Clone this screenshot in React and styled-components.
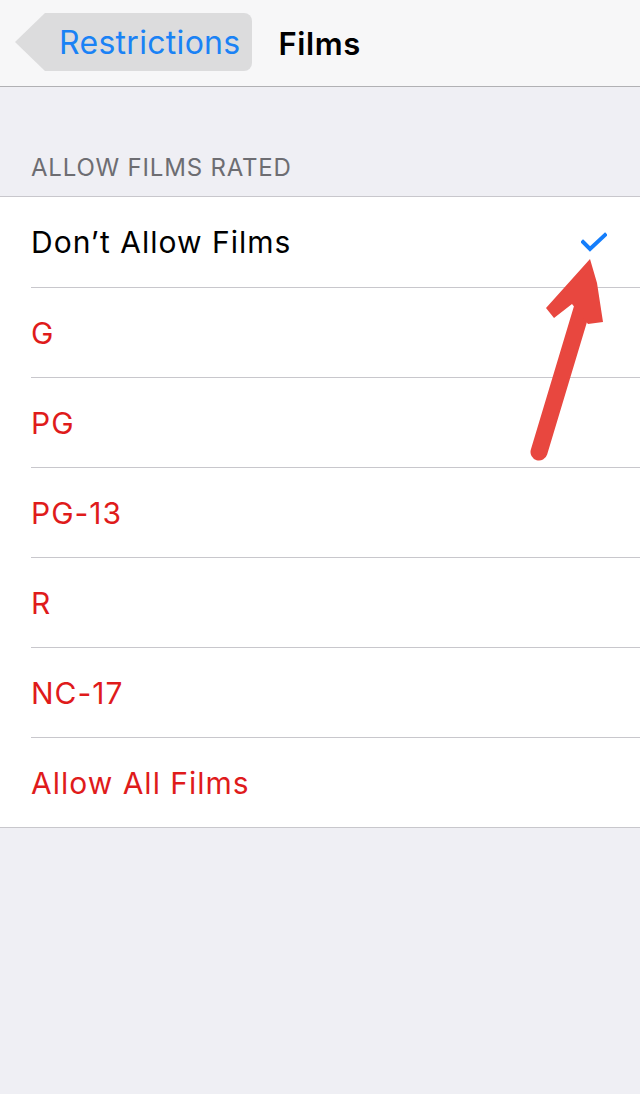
import React from "react";
import styled, { createGlobalStyle } from "styled-components";

const GlobalStyle = createGlobalStyle`
  body {
    margin: 0;
    background: #efeff4;
    font-family: "Inter", "Liberation Sans", sans-serif;
  }
`;

const ratings = ["G", "PG", "PG-13", "R", "NC-17", "Allow All Films"];

const App = () => (
  <Screen>
    <GlobalStyle />
    <NavBar>
      <BackButton>Restrictions</BackButton>
      <Title>Films</Title>
    </NavBar>
    <SectionHeader>ALLOW FILMS RATED</SectionHeader>
    <List>
      <Row>
        <Label>Don’t Allow Films</Label>
        <Check viewBox="0 0 26 20">
          <polyline points="2,10 9,17 24,3" />
        </Check>
      </Row>
      {ratings.map((r) => (
        <Row key={r}>
          <Label $restricted>{r}</Label>
        </Row>
      ))}
    </List>
    <Arrow viewBox="0 0 80 210">
      <path
        d="M9 195 L52 52"
        stroke="#e8473f"
        strokeWidth="17"
        strokeLinecap="round"
        fill="none"
      />
      <polygon points="60,2 67,26 73,65 58,67 42,47 24,61 16,51" fill="#e8473f" />
    </Arrow>
  </Screen>
);

const Screen = styled.div`
  position: relative;
  width: 640px;
  min-height: 1094px;
  background: #efeff4;
`;

const NavBar = styled.div`
  height: 87px;
  box-sizing: border-box;
  background: #f7f7f8;
  border-bottom: 1px solid #b1b1b4;
  display: flex;
  align-items: center;
  padding-left: 45px;
  gap: 27px;
`;

const BackButton = styled.div`
  position: relative;
  height: 58px;
  margin-top: -2px;
  display: flex;
  align-items: center;
  padding: 0 11px 0 14px;
  background: #dcdcdd;
  border-radius: 0 8px 8px 0;
  color: #1a82f5;
  font-size: 32px;
  letter-spacing: 0.3px;
  &::before {
    content: "";
    position: absolute;
    left: -30px;
    top: 0;
    border-top: 29px solid transparent;
    border-bottom: 29px solid transparent;
    border-right: 30px solid #dcdcdd;
  }
`;

const Title = styled.div`
  font-size: 31px;
  font-weight: 600;
  letter-spacing: 0.6px;
  color: #000;
`;

const SectionHeader = styled.div`
  padding: 66px 31px 0;
  height: 109px;
  box-sizing: border-box;
  font-size: 24px;
  letter-spacing: 0.8px;
  color: #6d6d72;
  line-height: 30px;
`;

const List = styled.div`
  background: #fff;
  border-top: 1px solid #c8c7cc;
  border-bottom: 1px solid #c8c7cc;
`;

const Row = styled.div`
  margin-left: 31px;
  padding-right: 31px;
  height: 90px;
  box-sizing: border-box;
  display: flex;
  align-items: center;
  justify-content: space-between;
  & + & {
    border-top: 1px solid #c8c7cc;
  }
`;

const Label = styled.span`
  font-size: 30px;
  letter-spacing: 1px;
  color: ${(p) => (p.$restricted ? "#df1b1b" : "#000")};
`;

const Check = styled.svg`
  width: 26px;
  height: 20px;
  margin-right: 2px;
  polyline {
    fill: none;
    stroke: #157efb;
    stroke-width: 4;
    stroke-linecap: square;
  }
`;

const Arrow = styled.svg`
  position: absolute;
  left: 530px;
  top: 257px;
  width: 80px;
  height: 210px;
`;

export default App;
